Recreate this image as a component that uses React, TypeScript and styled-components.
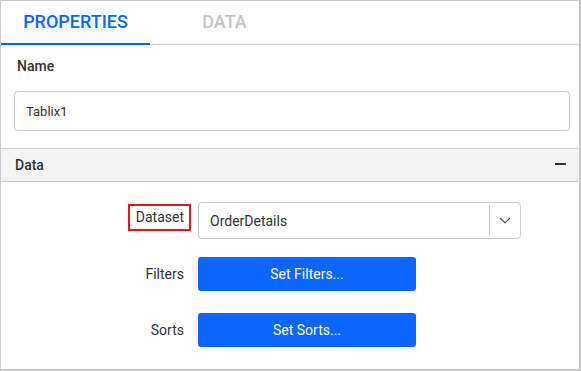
import styled, { createGlobalStyle } from "styled-components";

const GlobalStyle = createGlobalStyle`
  html, body {
    margin: 0;
    padding: 0;
    background: #ffffff;
  }
  body {
    font-family: Roboto, "Liberation Sans", Arial, sans-serif;
    color: #333333;
  }
`;

const Panel = styled.div`
  width: 578px;
  height: 368px;
  border: 1px solid #c8c8c8;
  border-right-width: 2px;
  border-bottom-width: 2px;
  background: #ffffff;
  display: flex;
  flex-direction: column;
`;

const TabBar = styled.div`
  display: flex;
  height: 43px;
  border-bottom: 1px solid #cccccc;
`;

const Tab = styled.div<{ $active?: boolean }>`
  width: 149px;
  display: flex;
  align-items: center;
  justify-content: center;
  font-size: 18px;
  font-weight: 500;
  color: ${(p) => (p.$active ? "#0a66ff" : "#c4c4c4")};
  box-shadow: ${(p) => (p.$active ? "inset 0 -2px 0 #0a66ff" : "none")};
  margin-bottom: -1px;
  padding-bottom: 3px;
`;

const Section = styled.div`
  padding: 13px 9px 17px 13px;
`;

const FieldTitle = styled.div`
  font-size: 14px;
  font-weight: 500;
  color: #333333;
  padding-left: 3px;
  margin-bottom: 17px;
`;

const TextBox = styled.div`
  height: 38px;
  border: 1px solid #cccccc;
  border-radius: 4px;
  display: flex;
  align-items: center;
  padding-left: 11px;
  font-size: 13px;
  color: #333333;
`;

const GroupHeader = styled.div`
  height: 32px;
  background: #f4f4f4;
  border-top: 1px solid #cccccc;
  border-bottom: 1px solid #cccccc;
  display: flex;
  align-items: center;
  justify-content: space-between;
  padding: 0 13px 0 14px;
  font-size: 14px;
  font-weight: 500;
  color: #333333;
`;

const Minus = styled.span`
  width: 11px;
  height: 2px;
  background: #333333;
  margin-top: -3px;
`;

const Rows = styled.div`
  display: flex;
  flex-direction: column;
  padding-top: 20px;
`;

const Row = styled.div<{ $gap: number }>`
  display: grid;
  grid-template-columns: 190px auto;
  column-gap: 7px;
  align-items: center;
  margin-bottom: ${(p) => p.$gap}px;
`;

const Label = styled.div<{ $marked?: boolean }>`
  justify-self: end;
  font-size: 14px;
  color: #333333;
  padding: 3px 5px 4px 6px;
  border: 2px solid ${(p) => (p.$marked ? "#e3141b" : "transparent")};
  margin-top: ${(p) => (p.$marked ? "-6px" : "0")};
`;

const Select = styled.div`
  width: 321px;
  height: 35px;
  border: 1px solid #cccccc;
  border-radius: 4px;
  display: flex;
  align-items: stretch;
  font-size: 14px;
  color: #333333;
`;

const SelectValue = styled.div`
  flex: 1;
  display: flex;
  align-items: center;
  padding-left: 11px;
`;

const SelectArrow = styled.div`
  width: 30px;
  border-left: 1px solid #cccccc;
  margin: 2px 0;
  display: flex;
  align-items: center;
  justify-content: center;
`;

const Button = styled.button`
  width: 218px;
  height: 34px;
  border: none;
  border-radius: 3px;
  background: #0a66ff;
  color: #ffffff;
  font-family: inherit;
  font-size: 14px;
  font-weight: 400;
  padding: 0;
`;

export default function App() {
  return (
    <>
      <GlobalStyle />
      <Panel>
        <TabBar>
          <Tab $active>PROPERTIES</Tab>
          <Tab>DATA</Tab>
        </TabBar>
        <Section>
          <FieldTitle>Name</FieldTitle>
          <TextBox>Tablix1</TextBox>
        </Section>
        <GroupHeader>
          <span>Data</span>
          <Minus />
        </GroupHeader>
        <Rows>
          <Row $gap={18}>
            <Label $marked>Dataset</Label>
            <Select>
              <SelectValue>OrderDetails</SelectValue>
              <SelectArrow>
                <svg width="12" height="7" viewBox="0 0 12 7">
                  <path d="M1 1 L6 6 L11 1" fill="none" stroke="#555" strokeWidth="1.2" />
                </svg>
              </SelectArrow>
            </Select>
          </Row>
          <Row $gap={22}>
            <Label>Filters</Label>
            <Button>Set Filters...</Button>
          </Row>
          <Row $gap={0}>
            <Label>Sorts</Label>
            <Button>Set Sorts...</Button>
          </Row>
        </Rows>
      </Panel>
    </>
  );
}
